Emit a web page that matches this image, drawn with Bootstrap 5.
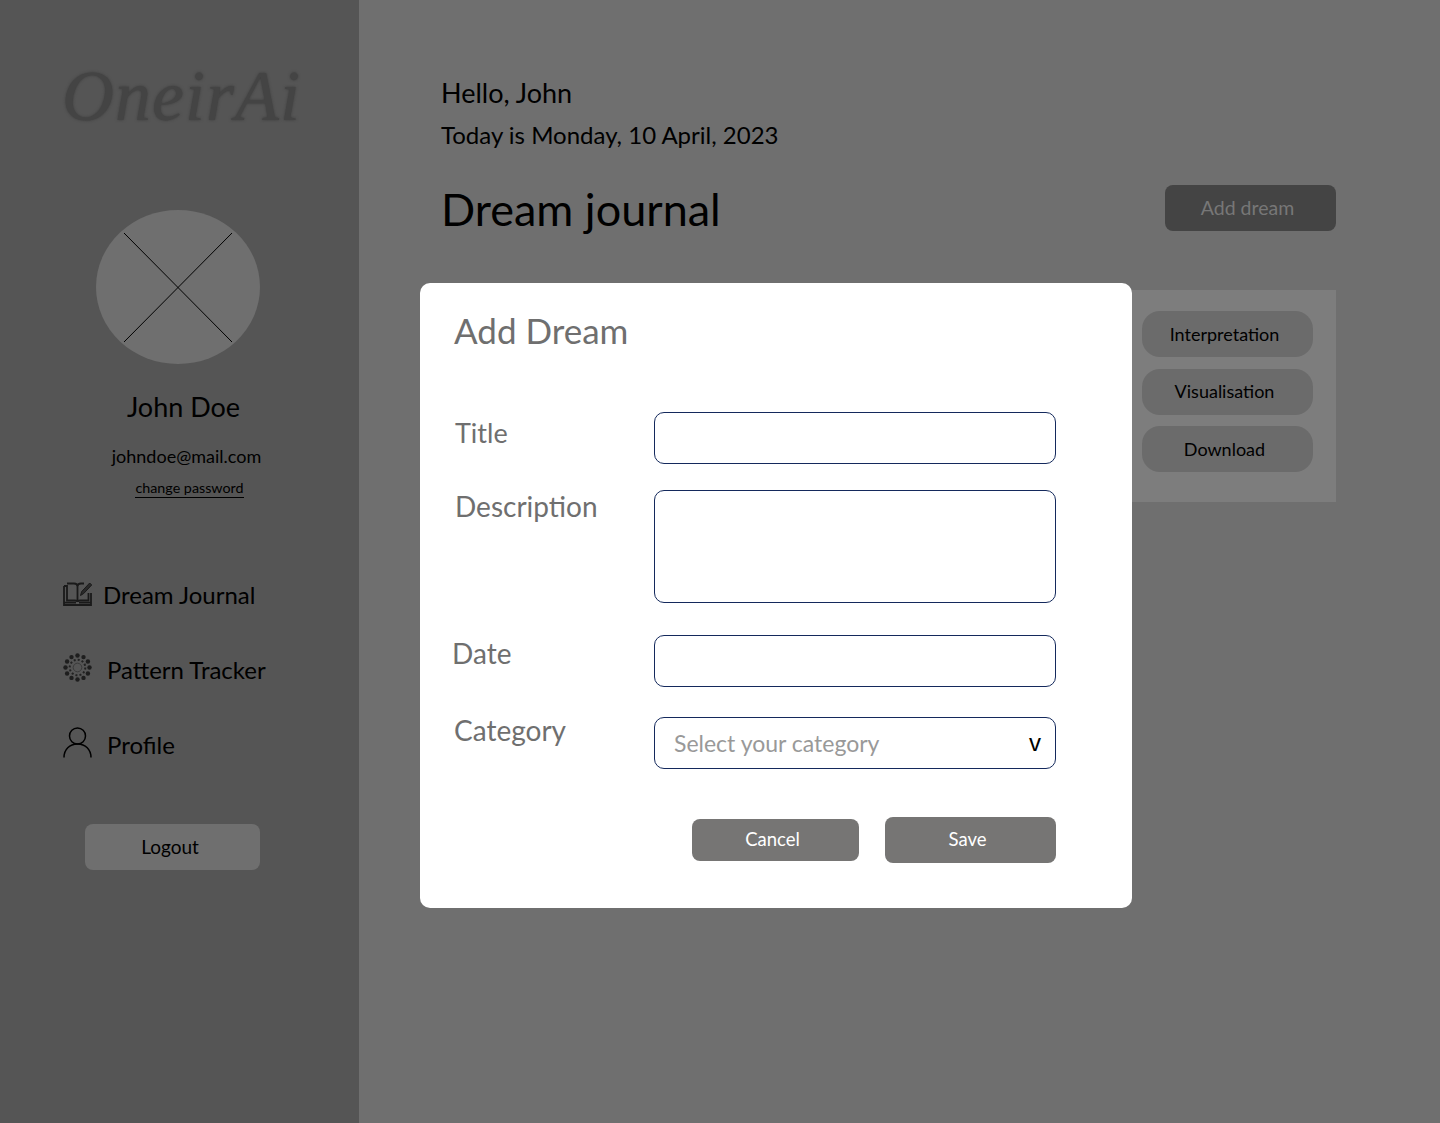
<!DOCTYPE html>
<html lang="en">
<head>
  <meta charset="UTF-8">
  <title>OneirAi - Dream journal</title>
  <link href="https://cdn.jsdelivr.net/npm/bootstrap@5.3.2/dist/css/bootstrap.min.css" rel="stylesheet">
  <style>
    body {
      font-family: "Lato", "Liberation Sans", sans-serif;
      background-color: #6f6f6f;
      color: #000;
    }

    .app-shell {
      height: 1123px;
      overflow: hidden;
      position: relative;
    }

    /* sidebar */
    .side-panel {
      width: 359px;
      flex-shrink: 0;
      background-color: #555;
      padding-top: 56px;
    }

    .logo-text {
      font-family: "Liberation Serif", serif;
      font-style: italic;
      font-size: 72px;
      line-height: 80px;
      color: #444;
      letter-spacing: 1px;
      margin: 0 0 0 62px;
      text-shadow: 0 0 3px #3c3c3c;
    }

    .avatar-pic {
      display: block;
      margin: 74px 0 0 96px;
    }

    .user-name { font-size: 27px; line-height: 40px; margin: 23px 0 0 8px; }
    .user-mail { font-size: 18px; line-height: 26px; margin: 16px 0 0 14px; }
    .pass-link {
      display: inline-block;
      font-size: 14.3px;
      line-height: 18px;
      color: #000;
      text-decoration: none;
      border-bottom: 1px solid #000;
      margin: 10px 0 0 20px;
    }

    .side-nav { margin-top: 78px; }

    .side-link {
      color: #000;
      text-decoration: none;
      font-size: 24px;
      line-height: 36px;
      padding: 0 0 0 63px;
      margin-bottom: 39px;
      height: 36px;
    }

    .side-link svg { margin-bottom: 5px; }
    .link-gap-sm { gap: 11px; }
    .link-gap-lg { gap: 15px; }

    .btn-logout {
      width: 175px;
      height: 46px;
      margin: 22px 0 0 85px;
      padding: 0 5px 0 0;
      background-color: #6f6f6f;
      border: 0;
      border-radius: 8px;
      color: #000;
      font-size: 19px;
    }

    /* main area */
    .main-area { padding: 72px 104px 0 82px; }

    .hello-line { font-size: 27px; line-height: 42px; margin: 0; }
    .today-line { font-size: 24px; line-height: 42px; margin: 0; }
    .title-row { margin-top: 22px; }
    .page-title { font-size: 45px; line-height: 58px; padding-top: 2px; font-weight: 400; margin: 0; }

    .btn-add {
      width: 171px;
      height: 46px;
      background-color: #444;
      border: 0;
      border-radius: 8px;
      color: #777;
      font-size: 19.5px;
      padding: 0 6px 0 0;
    }

    .dream-panel {
      height: 212px;
      margin-top: 52px;
      background-color: #7d7d7d;
      padding: 21px 23px 0 0;
      gap: 11.5px;
    }

    .btn-dream {
      width: 171px;
      height: 46px;
      padding: 0 6px 0 0;
      background-color: #6b6b6b;
      border: 0;
      border-radius: 18px;
      color: #000;
      font-size: 18px;
    }

    /* add dream dialog, lies over the page */
    .dream-dialog {
      position: absolute;
      left: 420px;
      top: 283px;
      width: 712px;
      height: 625px;
      background-color: #fff;
      border-radius: 10px;
      padding: 24px 76px 0 34px;
    }

    .dialog-title { font-size: 35px; line-height: 46px; font-weight: 400; color: #6f6f6f; margin: 0 0 59px; }
    .field-label { width: 200px; flex-shrink: 0; font-size: 28px; color: #6f6f6f; margin: 0; }
    .label-title { line-height: 42px; padding-left: 1px; font-size: 27px; }
    .label-desc { line-height: 32px; padding-left: 1px; }
    .label-date { line-height: 36px; margin-left: -2px; width: 202px; }
    .label-cat { line-height: 26px; }
    .field-box {
      height: 52px;
      border: 1px solid #14295c;
      border-radius: 10px;
      box-shadow: none;
    }
    textarea.field-box { height: 113px; resize: none; }
    .select-box {
      color: #999;
      font-size: 23px;
      line-height: 50px;
      padding: 0 14px 0 19px;
    }
    .select-arrow { color: #000; font-family: "Liberation Sans", sans-serif; font-size: 24px; }

    .row-gap-a { margin-bottom: 26px; }
    .row-gap-b { margin-bottom: 32px; }
    .row-gap-c { margin-bottom: 30px; }
    .dialog-actions { gap: 26px; margin-top: 48px; }

    .btn-cancel, .btn-save {
      background-color: #767574;
      border: 0;
      border-radius: 8px;
      color: #fff;
      font-size: 18.5px;
      padding: 0 6px 0 0;
    }
    .btn-cancel { width: 167px; height: 42px; }
    .btn-save { width: 171px; height: 46px; }
  </style>
</head>
<body>

  <div class="app-shell d-flex">
    <!-- Sidebar -->
    <aside class="side-panel">
      <p class="logo-text">OneirAi</p>
      <svg class="avatar-pic" width="164" height="154" viewBox="0 0 164 154">
        <ellipse cx="82" cy="77" rx="82" ry="77" fill="#6f6f6f"/>
        <path d="M28 23 136 132M136 23 28 132" stroke="#000" stroke-width="1" fill="none"/>
      </svg>
      <div class="text-center user-name">John Doe</div>
      <div class="text-center user-mail">johndoe@mail.com</div>
      <div class="text-center"><a href="#" class="pass-link">change password</a></div>

      <nav class="d-flex flex-column side-nav">
        <a href="#" class="side-link d-flex align-items-center link-gap-sm">
          <svg width="29" height="26" viewBox="0 0 29 26" fill="none" stroke="#1a1a1a" stroke-width="1.800">
            <path d="M1 6h3v14.500h8c1.500 0 2.500 .5 2.500 1.500 0-1 1-1.500 2.500-1.500h8.500V13"/>
            <path d="M1 6v19h27V13"/>
            <path d="M4 3.500h7c2 0 3.500 1 3.500 3v15.500M14.500 6.500c0-2 1.500-3 3.500-3h3"/>
            <path d="M1 22.700h12M16 22.700h12"/>
            <path d="M17.500 15.500l1.200-4 8-8.500 2 2-8 8.500z" fill="#2a2a2a" stroke-width="1"/>
          </svg>
          <span>Dream Journal</span>
        </a>
        <a href="#" class="side-link d-flex align-items-center link-gap-lg">
          <svg width="29" height="29" viewBox="-14.500 -14.500 29 29" fill="#1e1e1e">
            <circle cx="0" cy="-12" r="2.200"/><circle cx="6" cy="-10.400" r="2.200"/><circle cx="10.400" cy="-6" r="2.200"/><circle cx="12" cy="0" r="2.200"/><circle cx="10.400" cy="6" r="2.200"/><circle cx="6" cy="10.400" r="2.200"/><circle cx="0" cy="12" r="2.200"/><circle cx="-6" cy="10.400" r="2.200"/><circle cx="-10.400" cy="6" r="2.200"/><circle cx="-12" cy="0" r="2.200"/><circle cx="-10.400" cy="-6" r="2.200"/><circle cx="-6" cy="-10.400" r="2.200"/>
            <circle r="7.800" fill="none" stroke="#222" stroke-width="2" stroke-dasharray="2 2.080"/>
            <circle r="4.300" fill="none" stroke="#3a3a3a" stroke-width="1"/>
          </svg>
          <span>Pattern Tracker</span>
        </a>
        <a href="#" class="side-link d-flex align-items-center link-gap-lg">
          <svg width="29" height="31" viewBox="0 0 29 31" fill="none" stroke="#000" stroke-width="1.500">
            <circle cx="14.500" cy="9" r="8"/>
            <path d="M1 30.500c0-8 5.500-13.500 13.500-13.500S28 22.500 28 30.500"/>
          </svg>
          <span>Profile</span>
        </a>
      </nav>
      <button type="button" class="btn btn-logout">Logout</button>
    </aside>

    <!-- Main -->
    <main class="main-area flex-grow-1">
      <p class="hello-line">Hello, John</p>
      <p class="today-line">Today is Monday, 10 April, 2023</p>
      <div class="title-row d-flex justify-content-between align-items-center">
        <h1 class="page-title">Dream journal</h1>
        <button type="button" class="btn btn-add">Add dream</button>
      </div>
      <div class="dream-panel d-flex flex-column align-items-end">
        <button type="button" class="btn btn-dream">Interpretation</button>
        <button type="button" class="btn btn-dream">Visualisation</button>
        <button type="button" class="btn btn-dream">Download</button>
      </div>
    </main>

    <!-- Add dream -->
    <div class="dream-dialog">
      <h2 class="dialog-title">Add Dream</h2>
      <form>
        <div class="d-flex row-gap-a">
          <label class="field-label label-title">Title</label>
          <input type="text" class="form-control field-box">
        </div>
        <div class="d-flex row-gap-b">
          <label class="field-label label-desc">Description</label>
          <textarea class="form-control field-box"></textarea>
        </div>
        <div class="d-flex row-gap-c">
          <label class="field-label label-date">Date</label>
          <input type="text" class="form-control field-box">
        </div>
        <div class="d-flex">
          <label class="field-label label-cat">Category</label>
          <div class="field-box select-box d-flex justify-content-between flex-grow-1">
            <span>Select your category</span>
            <span class="select-arrow">v</span>
          </div>
        </div>
        <div class="dialog-actions d-flex justify-content-end align-items-center">
          <button type="button" class="btn btn-cancel">Cancel</button>
          <button type="button" class="btn btn-save">Save</button>
        </div>
      </form>
    </div>
  </div>

  <script src="https://cdn.jsdelivr.net/npm/bootstrap@5.3.2/dist/js/bootstrap.bundle.min.js"></script>
</body>
</html>
